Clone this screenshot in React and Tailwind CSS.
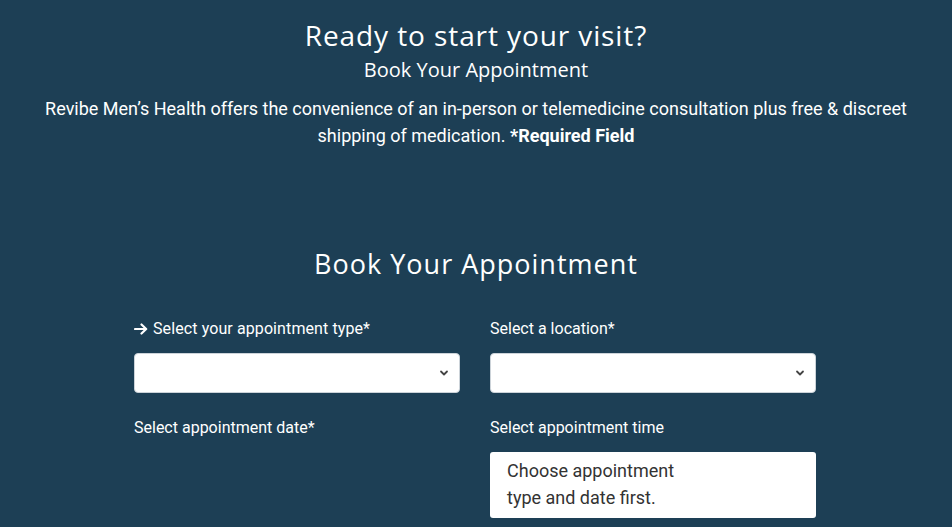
import React from 'react'

function Chevron() {
  return (
    <svg width="10" height="10" viewBox="0 0 10 10" className="absolute right-[10px] top-1/2 -translate-y-1/2 text-[#444]">
      <path d="M2 3.5 L5 6.5 L8 3.5" fill="none" stroke="currentColor" strokeWidth="1.8" strokeLinecap="round" strokeLinejoin="round" />
    </svg>
  )
}

function SelectBox() {
  return (
    <div className="relative h-[40px] bg-white rounded-[4px] border border-[#ccd3d9]">
      <Chevron />
    </div>
  )
}

export default function App() {
  return (
    <div className="w-[952px] h-[527px] overflow-hidden bg-[#1d3f55] text-white font-['Roboto',sans-serif]">
      <section className="pt-[18px] text-center">
        <h1 className="font-['Open_Sans',sans-serif] text-[28px] leading-[34px] tracking-[0.9px]">Ready to start your visit?</h1>
        <h2 className="font-['Open_Sans',sans-serif] text-[20px] leading-[30px] mt-[3px]">Book Your Appointment</h2>
        <p className="text-[18px] leading-[27px] mt-[10px] px-[40px]">
          Revibe Men’s Health offers the convenience of an in-person or telemedicine consultation plus free &amp; discreet shipping of medication. <b className="font-bold">*Required Field</b>
        </p>
      </section>

      <section className="mt-[97px]">
        <h2 className="text-center font-['Open_Sans',sans-serif] text-[27px] leading-[36px] tracking-[1px]">Book Your Appointment</h2>
        <div className="w-[682px] ml-[134px] mt-[36px] grid grid-cols-2 gap-x-[30px]">
          <div>
            <label className="flex items-center gap-[5px] text-[16px] leading-[22px]">
              <svg width="14" height="12" viewBox="0 0 14 12" className="shrink-0">
                <path d="M1 6 H12 M7.5 1.5 L12.2 6 L7.5 10.5" fill="none" stroke="currentColor" strokeWidth="2.2" strokeLinecap="round" strokeLinejoin="round" />
              </svg>
              <span className="tracking-[0.1px]">Select your appointment type*</span>
            </label>
            <div className="mt-[13px]"><SelectBox /></div>
          </div>
          <div>
            <label className="block text-[16px] leading-[22px]">Select a location*</label>
            <div className="mt-[13px]"><SelectBox /></div>
          </div>
          <div className="mt-[24px]">
            <label className="block text-[16px] leading-[22px]">Select appointment date*</label>
          </div>
          <div className="mt-[24px]">
            <label className="block text-[16px] leading-[22px]">Select appointment time</label>
            <div className="mt-[13px] bg-white rounded-[3px] text-[#333] text-[18px] leading-[27px] pl-[17px] pt-[5px] pb-[7px] h-[66px]">
              Choose appointment<br />type and date first.
            </div>
          </div>
        </div>
      </section>
    </div>
  )
}
